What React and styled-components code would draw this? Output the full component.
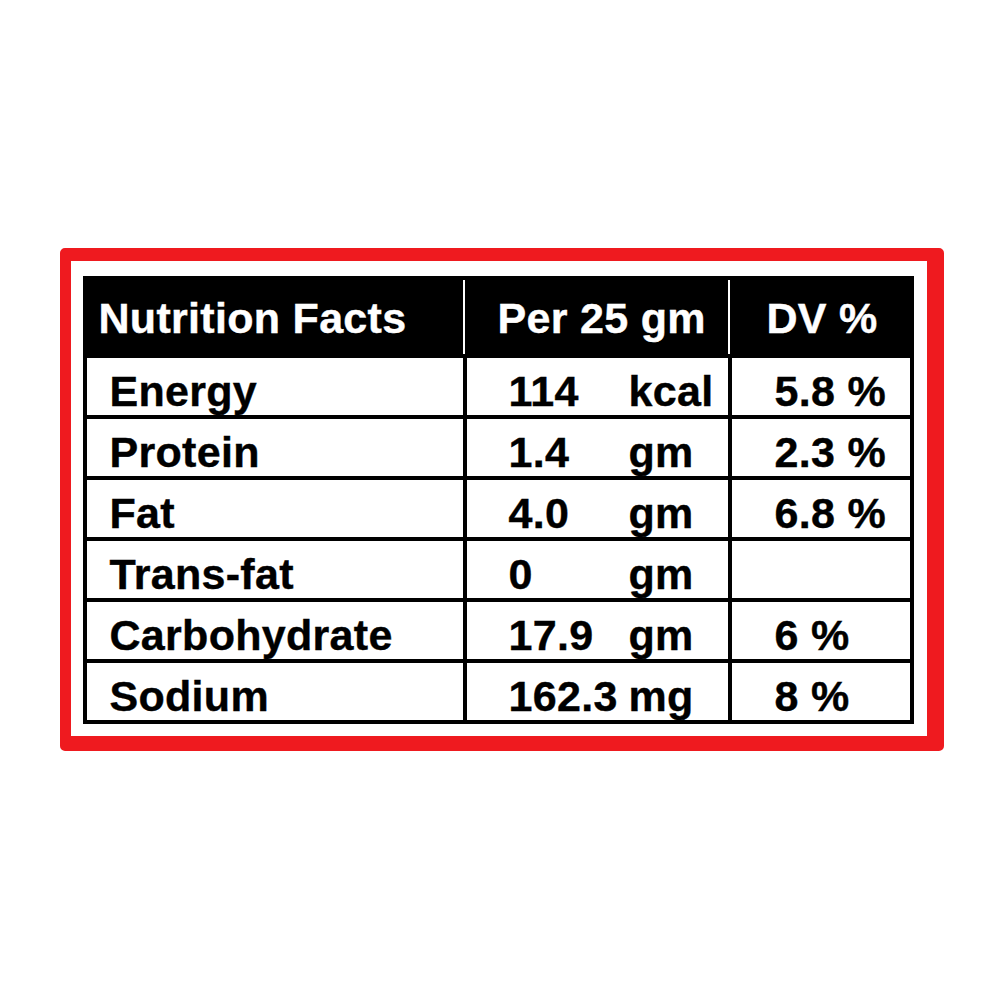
import React from 'react';
import styled, { createGlobalStyle } from 'styled-components';

const GlobalStyle = createGlobalStyle`
  html, body {
    margin: 0;
    padding: 0;
    background: #ffffff;
  }
`;

const Page = styled.div`
  display: flex;
  align-items: center;
  justify-content: center;
  width: 1000px;
  height: 1000px;
  padding: 0 0 1px 3px;
  box-sizing: border-box;
  font-family: "Liberation Sans", Arial, sans-serif;
  font-weight: 700;
`;

const Frame = styled.div`
  box-sizing: border-box;
  width: 884px;
  height: 503px;
  border-style: solid;
  border-color: #ef1a1f;
  border-width: 13px 17px 15px 11px;
  border-radius: 5px;
  padding: 15px 12px 11px 12px;
  background: #ffffff;
`;

const Table = styled.div`
  box-sizing: border-box;
  width: 831px;
  border: 4px solid #000;
`;

const Row = styled.div`
  display: grid;
  grid-template-columns: 376px 265px 1fr;
  height: ${({ head }) => (head ? '74px' : '57px')};
  background: ${({ head }) => (head ? '#000' : '#fff')};
  color: ${({ head }) => (head ? '#fff' : '#000')};
  border-top: ${({ head }) => (head ? 'none' : '4px solid #000')};
`;

const Cell = styled.div`
  box-sizing: border-box;
  display: flex;
  align-items: flex-start;
  font-size: 43px;
  line-height: 48px;
  letter-spacing: 0.3px;
  white-space: nowrap;
  -webkit-text-stroke: 0.4px currentColor;
  padding-top: ${({ head }) => (head ? '14px' : '9px')};
  padding-left: ${({ pad }) => pad}px;
  border-left: ${({ head, first }) => {
    if (first) return 'none';
    return head ? '2px solid #fff' : '4px solid #000';
  }};
`;

const Amount = styled.span`
  display: inline-block;
  width: 120px;
`;

const rows = [
  { name: 'Energy', amount: '114', unit: 'kcal', dv: '5.8 %' },
  { name: 'Protein', amount: '1.4', unit: 'gm', dv: '2.3 %' },
  { name: 'Fat', amount: '4.0', unit: 'gm', dv: '6.8 %' },
  { name: 'Trans-fat', amount: '0', unit: 'gm', dv: '' },
  { name: 'Carbohydrate', amount: '17.9', unit: 'gm', dv: '6 %' },
  { name: 'Sodium', amount: '162.3', unit: 'mg', dv: '8 %' },
];

export default function App() {
  return (
    <Page>
      <GlobalStyle />
      <Frame>
        <Table>
          <Row head>
            <Cell head first pad={12}>Nutrition Facts</Cell>
            <Cell head pad={33}>Per 25 gm</Cell>
            <Cell head pad={37}>DV %</Cell>
          </Row>
          {rows.map((r) => (
            <Row key={r.name}>
              <Cell first pad={23}>{r.name}</Cell>
              <Cell pad={42}>
                <Amount>{r.amount}</Amount>
                {r.unit}
              </Cell>
              <Cell pad={43}>{r.dv}</Cell>
            </Row>
          ))}
        </Table>
      </Frame>
    </Page>
  );
}
